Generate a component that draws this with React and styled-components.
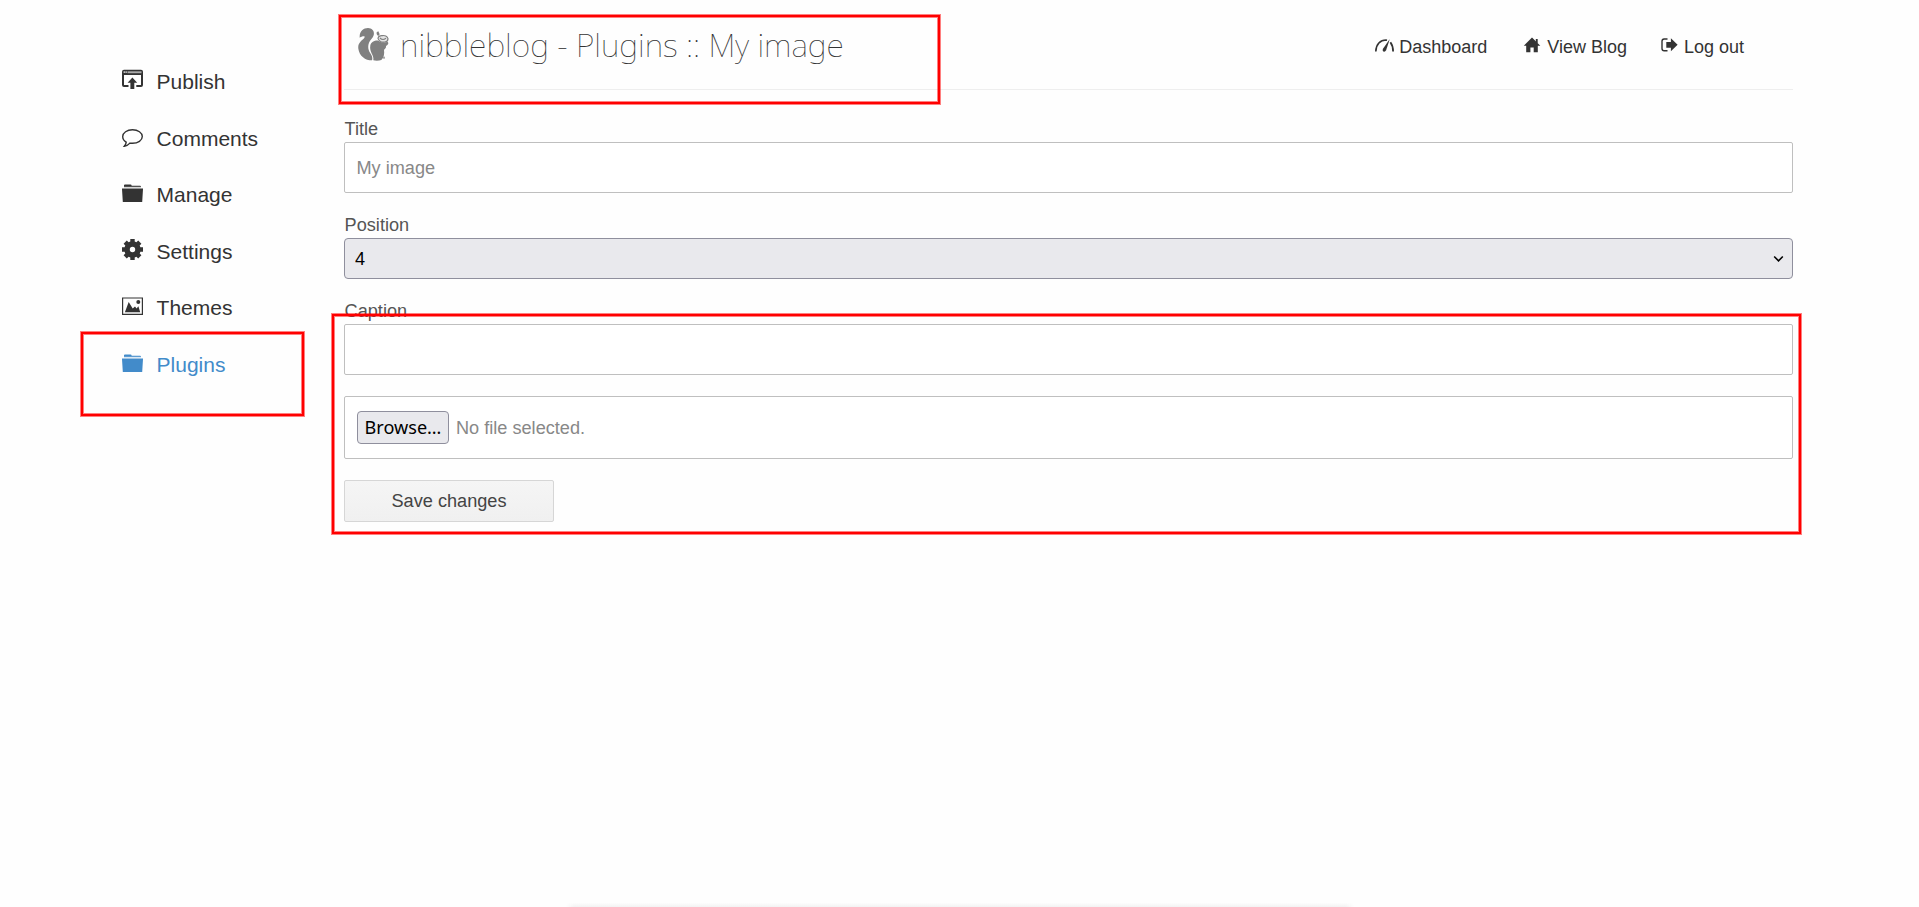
import React from "react";
import styled, { createGlobalStyle } from "styled-components";

const GlobalStyle = createGlobalStyle`
  *, *::before, *::after { box-sizing: border-box; }
  html, body { margin: 0; height: 100%; }
  body {
    background: #fefefe;
    color: #333;
    font-family: "Liberation Sans", Arial, sans-serif;
    font-size: 18.15px;
    overflow: hidden;
  }
`;

const Page = styled.div`
  position: relative;
  display: flex;
  flex-direction: column;
  height: 907px;
`;

const Columns = styled.div`
  display: flex;
  flex: 1;
  min-height: 0;
`;

const Sidebar = styled.nav`
  width: 344px;
  padding: 53.65px 0 0 122px;
`;

const SideLink = styled.a`
  display: flex;
  align-items: center;
  gap: 13.6px;
  height: 56.6px;
  font-size: 21px;
  line-height: 24px;
  color: ${(p) => (p.$active ? "#428bca" : "#333")};
  text-decoration: none;

  svg {
    width: 21px;
    height: 21px;
    margin-bottom: 5px;
    fill: currentColor;
  }
`;

const Main = styled.main`
  width: 1449px;
`;

const Header = styled.header`
  display: flex;
  justify-content: space-between;
  align-items: flex-start;
  height: 90px;
  border-bottom: 1px solid #eee;
`;

const Brand = styled.h1`
  display: flex;
  align-items: flex-start;
  gap: 11px;
  margin: 0;
  padding: 23px 0 0 14px;
  font: 100 32.1px/44px "Noto Sans", "Open Sans", sans-serif;
  color: #333;

  svg {
    width: 31px;
    height: 33px;
    margin-top: 5px;
  }
`;

const TopNav = styled.nav`
  display: flex;
  gap: 34px;
  padding: 37px 49px 0 0;
`;

const TopLink = styled.a`
  display: flex;
  font-size: 18px;
  line-height: 21px;
  color: #333;
  text-decoration: none;
  white-space: nowrap;

  svg {
    width: ${(p) => p.$icon}px;
    height: 18px;
    margin-top: -1px;
    fill: currentColor;
  }
`;

const Form = styled.form`
  display: flex;
  flex-direction: column;
  padding-top: 28px;
`;

const Field = styled.label`
  display: block;
  margin-bottom: 21px;
  color: #555;
`;

const Caption = styled.span`
  display: block;
  height: 24px;
  padding: 1px 0 0 0.6px;
  line-height: 21px;
`;

const TextInput = styled.input`
  display: block;
  width: 100%;
  height: 51px;
  padding: 2px 11.5px 0;
  border: 1px solid #bfbfbf;
  border-radius: 2px;
  background: #fff;
  color: #888;
  font: inherit;
  outline: none;
`;

const SelectBox = styled.span`
  position: relative;
  display: block;

  svg {
    position: absolute;
    right: 9px;
    top: 17px;
    width: 11px;
    height: 8px;
    fill: none;
    stroke: #000;
    stroke-width: 1.6;
    pointer-events: none;
  }
`;

const Select = styled.select`
  appearance: none;
  display: block;
  width: 100%;
  height: 41px;
  padding: 0 10px;
  border: 1px solid #8f8f9d;
  border-radius: 4px;
  background: #e9e9ed;
  color: #000;
  font: inherit;
`;

const FilePicker = styled.div`
  display: flex;
  align-items: center;
  gap: 7px;
  height: 63px;
  margin-bottom: 21px;
  padding: 0 12px;
  border: 1px solid #bfbfbf;
  border-radius: 2px;
  background: #fff;
  color: #888;
`;

const FileStatus = styled.span`
  padding-top: 2px;
`;

const BrowseButton = styled.button`
  width: 92px;
  height: 33px;
  padding: 0 0 2px;
  border: 1px solid #8f8f9d;
  border-radius: 4px;
  background: #e9e9ed;
  color: #000;
  font: 18.1px/24px "Noto Sans", sans-serif;
`;

const SaveButton = styled.button`
  width: 210px;
  height: 42px;
  padding: 0;
  border: 1px solid #d6d6d6;
  border-radius: 2px;
  background: linear-gradient(#f5f5f5, #f0f0f0);
  color: #444;
  font: inherit;
`;

const FooterShade = styled.footer`
  align-self: center;
  width: 788px;
  height: 4px;
  background: linear-gradient(#fdfdfd, #f3f3f3);
  mask-image: linear-gradient(90deg, transparent, #000 8px, #000 calc(100% - 8px), transparent);
`;

const Highlight = styled.div`
  position: absolute;
  left: ${(p) => p.$x}px;
  top: ${(p) => p.$y}px;
  width: ${(p) => p.$w}px;
  height: ${(p) => p.$h}px;
  border: 2px solid #f00;
  box-shadow: 0 0 0 1px rgba(255, 0, 0, 0.5), inset 0 0 0 1px rgba(255, 0, 0, 0.5);
  pointer-events: none;
`;

const Squirrel = () => (
  <svg viewBox="0 0 93 99" fill="#808080">
    <path d="M5 29C4 10 16 0 30 0c14 1 20 10 17 22-2 9-11 14-14 22-4 10-3 22 4 32 6 9 7 15 5 21C22 97 4 84 1 62-1 47 8 40 16 33c3-3 5-6 3-8-4-1-9 1-14 4Z" />
    <path d="M37 52c2-10 13-15 24-14 4 2 8 5 14 5 6 1 12-2 15 0 3 4-1 9-6 11 1 5-2 8-6 11 2 13-1 24-8 31-7 3-18 3-24 1 3-16-13-24-9-45Z" />
    <path d="m56 13 5-3 4 9-4 5c-4-2-6-6-5-11Z" />
    <path
      d="M60 31c1-6 7-9 13-8 7-2 15 2 17 9 0 6-3 9-9 10-8 1-18-2-21-11ZM66 30c5 5 12 5 18 1"
      fill="#e4e4e4"
      stroke="#808080"
      strokeWidth="3.500"
    />
    <path d="M74 86h7v6h-7z" opacity=".7" />
  </svg>
);

const PublishIcon = () => (
  <svg viewBox="0 0 21 21">
    <path d="M2 .8h17q2 0 2 2V16q0 2-2 2h-4.700v-2H19V6H2v10h4.500v2H2q-2 0-2-2V2.800q0-2 2-2Z" />
    <path d="M5.500 2.300h14v1.900h-14z" fill="#aaa" />
    <path d="M1.700 2.300h1v1.600h-1zM3.600 2.300h1v1.600h-1z" fill="#fefefe" />
    <path d="m10.400 8.500 4.800 5.300h-2.900V20H8.400v-6.200H5.600Z" />
  </svg>
);

const CommentIcon = () => (
  <svg viewBox="0 -2.700 21 21">
    <path
      d="M10.500 1.100c5.500 0 9.800 2.900 9.800 6.700s-4.300 6.800-9.800 6.800c-.9 0-1.800-.1-2.600-.2-1.500 1.700-3.400 2.900-5.600 3.200 1.100-1.300 1.800-2.600 1.900-4.200C2 12.200.7 10.100.7 7.800c0-3.800 4.300-6.700 9.800-6.700Z"
      fill="none"
      stroke="currentColor"
      strokeWidth="1.400"
    />
  </svg>
);

const FolderIcon = () => (
  <svg viewBox="0 0 21 21">
    <path d="M2 4V3.300q0-.9 1-.9h5.500q1 0 1.200 1.300H18q1 0 1 1v1H2Z" />
    <path d="M1.500 4.800h18v2.200h-18z" fill="#fefefe" opacity=".75" />
    <path d="M0 6.500h21L20.200 20H.8Z" />
  </svg>
);

const GearIcon = () => (
  <svg viewBox="0 0 21 21">
    <path
      fillRule="evenodd"
      d="M8.300 0h4.400v2.500l1.700.7L16.200 1.600l3.200 3.200-1.700 1.800.7 1.700H21v4.400h-2.600l-.7 1.700 1.700 1.800-3.200 3.200-1.800-1.700-1.700.8V21H8.300v-2.500l-1.700-.8-1.800 1.700-3.200-3.200 1.700-1.800-.7-1.700H0V8.300h2.600l.7-1.700-1.700-1.800 3.200-3.200 1.800 1.600 1.700-.7ZM10.500 7.800a2.700 2.700 0 1 0 0 5.400 2.700 2.700 0 0 0 0-5.400Z"
    />
  </svg>
);

const PictureIcon = () => (
  <svg viewBox="0 0 21 21">
    <path d="M.6 3h19.800v16.400H.6Z" fill="none" stroke="currentColor" strokeWidth="1.200" />
    <path d="M2.900 17.300 6.700 7l4 6.600 2.300-2 1.600 1.900 1.800-2.300 1.800 6.100Z" />
    <circle cx="16.300" cy="6.900" r="2" />
  </svg>
);

const GaugeIcon = () => (
  <svg viewBox="0 0 24 18">
    <path d="M.8 15.400C1 8.300 5.400 4 11 4l1 .2" fill="none" stroke="currentColor" strokeWidth="1.600" />
    <path d="M15.400 6.200q2.600 3.500 2.700 9.200" fill="none" stroke="currentColor" strokeWidth="1.800" />
    <path d="M14.800 3 11.100 14.200q-1 2-2.700 1.300-1.500-.9-.4-2.700Z" />
  </svg>
);

const HomeIcon = () => (
  <svg viewBox="1 0 26 18">
    <path d="m12 1.500 8.300 8.200H17.800V16.200h-4.100v-4.800h-3.300v4.800H6.200V9.700H3.800Z" />
    <path d="M15.800 3h1.900v4h-1.900z" />
  </svg>
);

const LogoutIcon = () => (
  <svg viewBox="0 0 23 18">
    <path d="M6.500 3H3.200Q1 3 1 5.200v7.400q0 2.200 2.200 2.200h3.300" fill="none" stroke="currentColor" strokeWidth="1.400" />
    <path d="M5.300 6h4.600V2.300l6.700 6.500-6.700 6.500v-3.600H5.300Z" />
  </svg>
);

const sideItems = [
  ["Publish", PublishIcon],
  ["Comments", CommentIcon],
  ["Manage", FolderIcon],
  ["Settings", GearIcon],
  ["Themes", PictureIcon],
  ["Plugins", FolderIcon],
];

const topItems = [
  ["Dashboard", GaugeIcon, 24],
  ["View Blog", HomeIcon, 26],
  ["Log out", LogoutIcon, 23],
];

export default function App() {
  return (
    <Page>
      <GlobalStyle />
      <Columns>
        <Sidebar>
          {sideItems.map(([label, Icon]) => (
            <SideLink key={label} $active={label === "Plugins"}>
              <Icon />
              {label}
            </SideLink>
          ))}
        </Sidebar>
        <Main>
          <Header>
            <Brand>
              <Squirrel />
              nibbleblog - Plugins :: My image
            </Brand>
            <TopNav>
              {topItems.map(([label, Icon, width]) => (
                <TopLink key={label} $icon={width}>
                  <Icon />
                  {label}
                </TopLink>
              ))}
            </TopNav>
          </Header>
          <Form>
            <Field>
              <Caption>Title</Caption>
              <TextInput defaultValue="My image" />
            </Field>
            <Field>
              <Caption>Position</Caption>
              <SelectBox>
                <Select defaultValue="4">
                  <option>4</option>
                </Select>
                <svg viewBox="0 0 11 8">
                  <path d="m1.200 1.500 4.300 4.400 4.300-4.400" />
                </svg>
              </SelectBox>
            </Field>
            <Field>
              <Caption>Caption</Caption>
              <TextInput />
            </Field>
            <FilePicker>
              <BrowseButton type="button">Browse…</BrowseButton>
              <FileStatus>No file selected.</FileStatus>
            </FilePicker>
            <SaveButton type="button">Save changes</SaveButton>
          </Form>
        </Main>
      </Columns>
      <FooterShade />
      <Highlight $x={339} $y={15} $w={601} $h={89} />
      <Highlight $x={81} $y={332} $w={223} $h={84} />
      <Highlight $x={332} $y={314} $w={1469} $h={220} />
    </Page>
  );
}
